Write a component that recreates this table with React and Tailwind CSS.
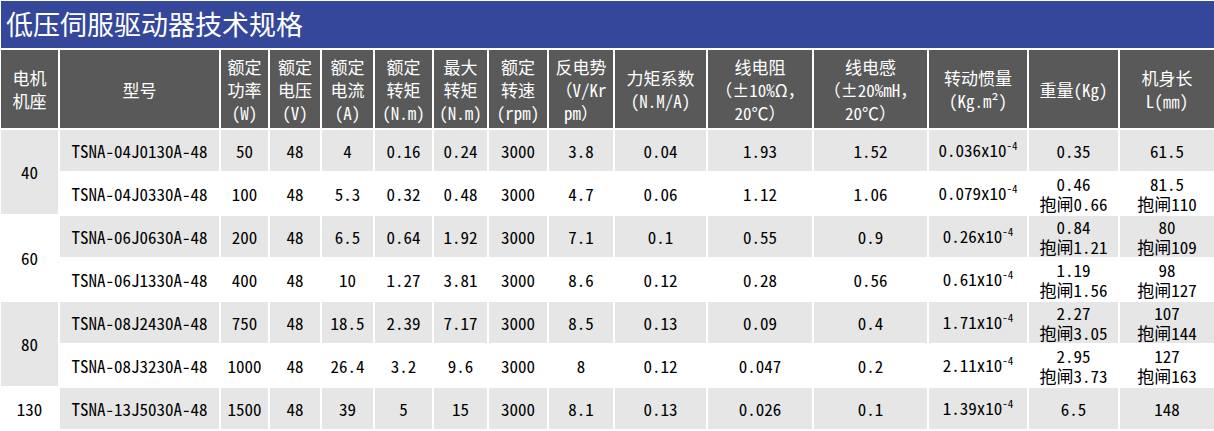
const FONT = { fontFamily: '"Noto Sans Mono CJK SC", "Noto Sans CJK SC", monospace' }

const headers = [
  ['电机', '机座'],
  ['型号'],
  ['额定', '功率', '(W)'],
  ['额定', '电压', '(V)'],
  ['额定', '电流', '(A)'],
  ['额定', '转矩', '(N.m)'],
  ['最大', '转矩', '(N.m)'],
  ['额定', '转速', '(rpm)'],
  ['反电势', '（V/Kr', 'pm）'],
  ['力矩系数', '(N.M/A)'],
  ['线电阻', '（±10%Ω，', '20℃）'],
  ['线电感', '（±20%mH，', '20℃）'],
  ['转动惯量', '(Kg.m²)'],
  ['重量(Kg)'],
  ['机身长', 'L(㎜)'],
]

// base: [label, gray?]
const rows = [
  { base: ['40', true], cells: ['TSNA-04J0130A-48', '50', '48', '4', '0.16', '0.24', '3000', '3.8', '0.04', '1.93', '1.52', '0.036', ['0.35'], ['61.5']] },
  { cells: ['TSNA-04J0330A-48', '100', '48', '5.3', '0.32', '0.48', '3000', '4.7', '0.06', '1.12', '1.06', '0.079', ['0.46', '抱闸0.66'], ['81.5', '抱闸110']] },
  { base: ['60', false], cells: ['TSNA-06J0630A-48', '200', '48', '6.5', '0.64', '1.92', '3000', '7.1', '0.1', '0.55', '0.9', '0.26', ['0.84', '抱闸1.21'], ['80', '抱闸109']] },
  { cells: ['TSNA-06J1330A-48', '400', '48', '10', '1.27', '3.81', '3000', '8.6', '0.12', '0.28', '0.56', '0.61', ['1.19', '抱闸1.56'], ['98', '抱闸127']] },
  { base: ['80', true], cells: ['TSNA-08J2430A-48', '750', '48', '18.5', '2.39', '7.17', '3000', '8.5', '0.13', '0.09', '0.4', '1.71', ['2.27', '抱闸3.05'], ['107', '抱闸144']] },
  { cells: ['TSNA-08J3230A-48', '1000', '48', '26.4', '3.2', '9.6', '3000', '8', '0.12', '0.047', '0.2', '2.11', ['2.95', '抱闸3.73'], ['127', '抱闸163']] },
  { base: ['130', false], single: true, cells: ['TSNA-13J5030A-48', '1500', '48', '39', '5', '15', '3000', '8.1', '0.13', '0.026', '0.1', '1.39', ['6.5'], ['148']] },
]

function HeaderCell({ lines }) {
  return (
    <div className="flex flex-col items-center justify-center bg-[#595959] text-center text-[17px] leading-[23px] text-white">
      {lines.map((l, i) => (
        <span key={i} className="whitespace-nowrap">{l}</span>
      ))}
    </div>
  )
}

function Cell({ value, gray, index }) {
  const bg = gray ? 'bg-[#e6e6e6]' : 'bg-white'
  let content
  if (Array.isArray(value)) {
    content = value.map((l, i) => (
      <span key={i} className="block h-[20px] whitespace-nowrap leading-[20px]">{l}</span>
    ))
  } else if (index === 11) {
    content = (
      <span className="whitespace-nowrap">
        {value}x10<span className="relative -top-[7px] text-[11px]">-4</span>
      </span>
    )
  } else {
    content = <span className="whitespace-nowrap">{value}</span>
  }
  return (
    <div className={`flex flex-col items-center justify-center text-center leading-[20px] ${bg}`}>
      {content}
    </div>
  )
}

export default function App() {
  return (
    <div className="w-[1214px] bg-white pl-px pt-px text-[17px] text-black" style={FONT}>
      <div className="flex h-[47px] items-center bg-[#34479b] pl-[5px] text-[27px] text-white">
        低压伺服驱动器技术规格
      </div>
      <div className="mt-[2px] grid grid-cols-[57px_159px_47px_50px_51px_57px_53px_58px_64px_91px_104px_113px_98px_89px_94px] grid-rows-[78px_repeat(7,41px)] gap-[2px]">
        {headers.map((h, i) => (
          <HeaderCell key={i} lines={h} />
        ))}
        {rows.map((r, ri) => {
          const gray = ri % 2 === 0
          return [
            r.base && (
              <div
                key={`b${ri}`}
                className={`flex items-center justify-center ${r.single ? '' : 'row-span-2'} ${r.base[1] ? 'bg-[#e6e6e6]' : 'bg-white'}`}
              >
                {r.base[0]}
              </div>
            ),
            ...r.cells.map((c, ci) => <Cell key={`${ri}-${ci}`} value={c} gray={gray} index={ci} />),
          ]
        })}
      </div>
    </div>
  )
}
